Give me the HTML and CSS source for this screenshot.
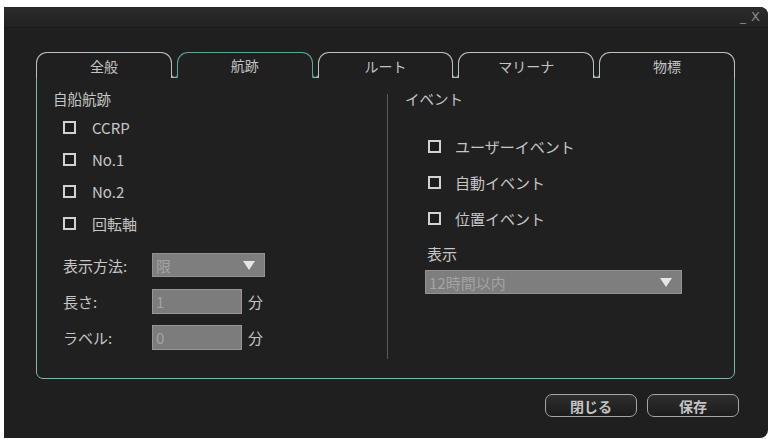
FILE: index.html
```html
<!DOCTYPE html>
<html lang="ja">
<head>
<meta charset="utf-8">
<link rel="stylesheet" href="styles.css">
</head>
<body>
<div class="window">
  <div class="titlebar"><span class="winctl"><span class="min">_</span><span class="close">X</span></span></div>
  <div class="content">
    <div class="tabs">
      <div class="tab first">全般</div>
      <div class="tab active">航跡</div>
      <div class="tab">ルート</div>
      <div class="tab">マリーナ</div>
      <div class="tab last">物標</div>
    </div>
    <div class="panel">
      <div class="col left">
        <div class="title">自船航跡</div>
        <div class="checks">
          <div class="check"><span class="box"></span><span>CCRP</span></div>
          <div class="check"><span class="box"></span><span>No.1</span></div>
          <div class="check"><span class="box"></span><span>No.2</span></div>
          <div class="check"><span class="box"></span><span>回転軸</span></div>
        </div>
        <div class="form">
          <div class="frow"><span class="flabel">表示方法:</span><div class="select small"><span class="val">限</span><span class="arrow"></span></div></div>
          <div class="frow"><span class="flabel">長さ:</span><div class="input">1</div><span class="unit">分</span></div>
          <div class="frow"><span class="flabel">ラベル:</span><div class="input">0</div><span class="unit">分</span></div>
        </div>
      </div>
      <div class="divider"></div>
      <div class="col right">
        <div class="title">イベント</div>
        <div class="checks rchecks">
          <div class="check"><span class="box"></span><span>ユーザーイベント</span></div>
          <div class="check"><span class="box"></span><span>自動イベント</span></div>
          <div class="check"><span class="box"></span><span>位置イベント</span></div>
        </div>
        <div class="display">
          <div class="dlabel">表示</div>
          <div class="select wide"><span class="val">12時間以内</span><span class="arrow"></span></div>
        </div>
      </div>
    </div>
    <div class="buttons">
      <div class="btn">閉じる</div>
      <div class="btn">保存</div>
    </div>
  </div>
</div>
</body>
</html>
```

FILE: styles.css
```css
html, body {
  margin: 0;
  padding: 0;
  background: #ffffff;
}
body {
  width: 773px;
  height: 439px;
  overflow: hidden;
  font-family: "Noto Sans CJK JP", "Noto Sans", sans-serif;
  font-size: 15px;
  color: #c6c6c6;
}
.window {
  margin: 7px 0 0 4px;
  width: 764px;
  height: 431px;
  background: #1f1f1f;
  border-radius: 0 8px 8px 0;
  box-sizing: border-box;
  overflow: hidden;
}
.titlebar {
  height: 20px;
  background: linear-gradient(#2b2b2b, #222222);
  display: flex;
  justify-content: flex-end;
  align-items: center;
  padding-right: 8px;
  border-bottom: 1px solid #181818;
}
.winctl {
  display: flex;
  gap: 5px;
  font-family: "DejaVu Sans", sans-serif;
  font-size: 12px;
  color: #8a8a8a;
  line-height: 14px;
}
.winctl .close { font-size: 13px; }
.content {
  padding: 24px 29px 0 32px;
}
.tabs {
  display: grid;
  grid-template-columns: repeat(5, 1fr);
  gap: 5px;
  margin-right: 4px;
  height: 26px;
  margin-bottom: -1px;
}
.tab {
  position: relative;
  border: 1px solid #b9c3c2;
  border-bottom: none;
  border-radius: 11px 11px 0 0;
  display: flex;
  justify-content: center;
  align-items: center;
  font-size: 14px;
  color: #c4c4c4;
  background: #1f1f1f;
  line-height: 16px;
}
.tab::before,
.tab::after {
  content: "";
  position: absolute;
  bottom: 0;
  width: 3px;
  height: 4px;
  border-color: inherit;
  border-style: solid;
  border-width: 0;
}
.tab::before {
  left: -4px;
  border-right-width: 1px;
  border-bottom-width: 1px;
  border-bottom-right-radius: 4px;
}
.tab::after {
  right: -4px;
  border-left-width: 1px;
  border-bottom-width: 1px;
  border-bottom-left-radius: 4px;
}
.tab.first::before,
.tab.last::after {
  display: none;
}
.tab.active {
  border-color: #5aa79e;
  border-bottom: 1px solid #202020;
  background: #202020;
  z-index: 1;
}
.tab.active::before,
.tab.active::after {
  bottom: -1px;
  border-bottom-color: #7ab8b0;
}
.panel {
  height: 302px;
  box-sizing: border-box;
  border: 1px solid #7ab8b0;
  border-radius: 0 0 7px 7px;
  margin-right: 4px;
  background: #202020;
  display: flex;
}
.col.left {
  width: 350px;
  padding: 13px 0 0 16px;
  box-sizing: border-box;
}
.title {
  line-height: 16px;
  font-size: 14.5px;
}
.checks {
  margin-top: 4px;
  padding-left: 10px;
}
.check {
  height: 32px;
  display: flex;
  align-items: center;
  gap: 16px;
}
.box {
  width: 13px;
  height: 13px;
  box-sizing: border-box;
  border: 2px solid #d2d2d2;
  background: #1c1c1c;
  flex: none;
}
.form {
  margin-top: 14px;
  padding-left: 10px;
  display: flex;
  flex-direction: column;
  gap: 12px;
}
.frow {
  height: 24px;
  display: flex;
  align-items: center;
}
.flabel {
  width: 89px;
  flex: none;
}
.select {
  height: 24px;
  box-sizing: border-box;
  background: #7e7e7e;
  border: 1px solid #929292;
  display: flex;
  align-items: center;
  justify-content: space-between;
  padding: 0 9px 0 3px;
  color: #a3a3a3;
}
.select.small { width: 113px; }
.select.wide { width: 257px; }
.arrow {
  width: 0;
  height: 0;
  border-left: 6px solid transparent;
  border-right: 6px solid transparent;
  border-top: 9px solid #e6e6e6;
}
.input {
  width: 90px;
  height: 25px;
  box-sizing: border-box;
  background: #7c7c7c;
  border: 1px solid #979797;
  color: #a3a3a3;
  padding-left: 3px;
  line-height: 23px;
}
.unit {
  margin-left: 6px;
}
.divider {
  width: 1px;
  height: 265px;
  margin-top: 16px;
  background: #5a5a5a;
  flex: none;
}
.col.right {
  flex: 1;
  padding: 13px 0 0 17px;
}
.rchecks {
  margin-top: 21px;
  padding-left: 23px;
}
.rchecks .check {
  height: 36px;
  gap: 14px;
}
.display {
  margin-top: 9px;
  padding-left: 20px;
}
.dlabel {
  line-height: 18px;
  padding-left: 2px;
  margin-bottom: 7px;
}
.buttons {
  display: flex;
  justify-content: flex-end;
  gap: 10px;
  margin-top: 15px;
}
.btn {
  width: 92px;
  height: 23px;
  box-sizing: border-box;
  border: 1px solid #a5a5a5;
  border-radius: 7px;
  background: linear-gradient(#2e2e2e, #1c1c1c);
  display: flex;
  justify-content: center;
  align-items: center;
  font-size: 14px;
  font-weight: bold;
  color: #c4c4c4;
}
```
